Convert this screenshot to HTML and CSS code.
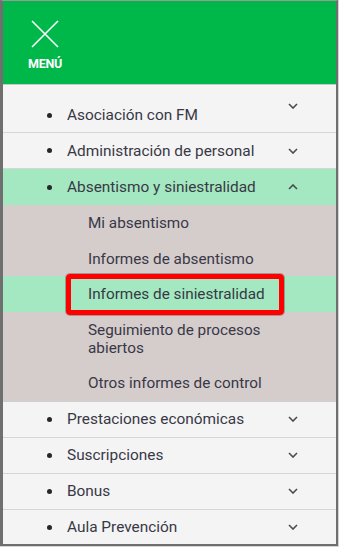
FILE: index.html
```html
<!DOCTYPE html>
<html lang="es">
<head>
<meta charset="utf-8">
<title>Menú</title>
<link rel="stylesheet" href="styles.css">
</head>
<body>
<div class="frame">
  <header class="header">
    <div class="menu-toggle">
      <svg class="close-icon" width="28" height="28" viewBox="0 0 28 28" aria-hidden="true">
        <path d="M1 1 L27 27 M27 1 L1 27" stroke="#ffffff" stroke-width="1.6" fill="none"/>
      </svg>
      <span class="menu-label">MENÚ</span>
    </div>
  </header>
  <ul class="nav">
    <li class="nav-item first">
      <span class="bullet"></span><span class="label">Asociación con FM</span>
      <svg class="chev" width="10" height="6" viewBox="0 0 10 6"><path d="M1 1 L5 5 L9 1" stroke="#4a4a52" stroke-width="1.6" fill="none"/></svg>
    </li>
    <li class="nav-item">
      <span class="bullet"></span><span class="label">Administración de personal</span>
      <svg class="chev" width="10" height="6" viewBox="0 0 10 6"><path d="M1 1 L5 5 L9 1" stroke="#4a4a52" stroke-width="1.6" fill="none"/></svg>
    </li>
    <li class="nav-item active">
      <span class="bullet"></span><span class="label">Absentismo y siniestralidad</span>
      <svg class="chev" width="10" height="6" viewBox="0 0 10 6"><path d="M1 5 L5 1 L9 5" stroke="#4a4a52" stroke-width="1.6" fill="none"/></svg>
    </li>
    <li class="submenu">
      <ul class="sub">
        <li class="sub-item">Mi absentismo</li>
        <li class="sub-item">Informes de absentismo</li>
        <li class="sub-item current"><span class="marked">Informes de siniestralidad</span></li>
        <li class="sub-item">Seguimiento de procesos<br>abiertos</li>
        <li class="sub-item">Otros informes de control</li>
      </ul>
    </li>
    <li class="nav-item">
      <span class="bullet"></span><span class="label">Prestaciones económicas</span>
      <svg class="chev" width="10" height="6" viewBox="0 0 10 6"><path d="M1 1 L5 5 L9 1" stroke="#4a4a52" stroke-width="1.6" fill="none"/></svg>
    </li>
    <li class="nav-item">
      <span class="bullet"></span><span class="label">Suscripciones</span>
      <svg class="chev" width="10" height="6" viewBox="0 0 10 6"><path d="M1 1 L5 5 L9 1" stroke="#4a4a52" stroke-width="1.6" fill="none"/></svg>
    </li>
    <li class="nav-item">
      <span class="bullet"></span><span class="label">Bonus</span>
      <svg class="chev" width="10" height="6" viewBox="0 0 10 6"><path d="M1 1 L5 5 L9 1" stroke="#4a4a52" stroke-width="1.6" fill="none"/></svg>
    </li>
    <li class="nav-item last">
      <span class="bullet"></span><span class="label">Aula Prevención</span>
      <svg class="chev" width="10" height="6" viewBox="0 0 10 6"><path d="M1 1 L5 5 L9 1" stroke="#4a4a52" stroke-width="1.6" fill="none"/></svg>
    </li>
  </ul>
</div>
</body>
</html>
```
FILE: styles.css
```css
html, body {
  margin: 0;
  padding: 0;
  background: #d4d4d4;
}
body {
  width: 339px;
  height: 547px;
  overflow: hidden;
  font-family: Roboto, "Liberation Sans", sans-serif;
}
.frame {
  box-sizing: border-box;
  width: 338px;
  height: 546px;
  border-left: 3px solid #6f6f6f;
  border-top: 1px solid #9a9a9a;
  border-right: 2px solid #6f6f6f;
  border-bottom: 2px solid #6f6f6f;
  background: #f4f4f4;
  overflow: hidden;
}
.header {
  height: 84px;
  background: #00b74a;
  border-bottom: 1px solid #c9c9c9;
  box-sizing: border-box;
  display: flex;
}
.menu-toggle {
  width: 44px;
  margin-left: 20px;
  display: flex;
  flex-direction: column;
  align-items: center;
  padding-top: 19px;
}
.close-icon {
  display: block;
}
.menu-label {
  margin-top: 10px;
  color: #ffffff;
  font-size: 12.5px;
  font-weight: 700;
  letter-spacing: -0.3px;
  line-height: 12px;
}
.nav {
  list-style: none;
  margin: 0;
  padding: 0;
}
.nav-item {
  display: flex;
  align-items: center;
  height: 35px;
  border-bottom: 1px solid #d6d6d6;
  color: #383846;
  font-size: 15.4px;
  font-weight: 400;
  padding-left: 44px;
  padding-right: 38px;
}
.nav-item.first {
  height: 47px;
  align-items: flex-start;
}
.nav-item.first .label {
  margin-top: 21px;
}
.nav-item.first .bullet {
  margin-top: 28px;
}
.nav-item.first .chev {
  margin-top: 18px;
}
.nav-item.last {
  border-bottom: none;
}
.nav-item.active {
  background: #a3e8c0;
  border-bottom: none;
  height: 36px;
}
.bullet {
  width: 5px;
  height: 5px;
  border-radius: 50%;
  background: #26262c;
  margin-right: 15px;
  flex: none;
}
.label {
  flex: 1;
  line-height: 18px;
}
.chev {
  flex: none;
}
.submenu {
  background: #d5cccc;
  border-bottom: 1px solid #d0d0d0;
}
.sub {
  list-style: none;
  margin: 0;
  padding: 0;
}
.sub-item {
  padding: 9px 0 8.5px 85px;
  line-height: 18px;
  font-size: 15.3px;
  font-weight: 400;
  color: #383846;
}
.sub-item.current {
  background: #a3e8c0;
}
.marked {
  position: relative;
}
.marked::after {
  content: "";
  position: absolute;
  left: -22px;
  right: -19px;
  top: -11px;
  bottom: -12px;
  border: 5px solid #ff0000;
  border-radius: 4px;
  box-shadow: 0 0 0 1px rgba(90, 40, 40, 0.35);
}
```
